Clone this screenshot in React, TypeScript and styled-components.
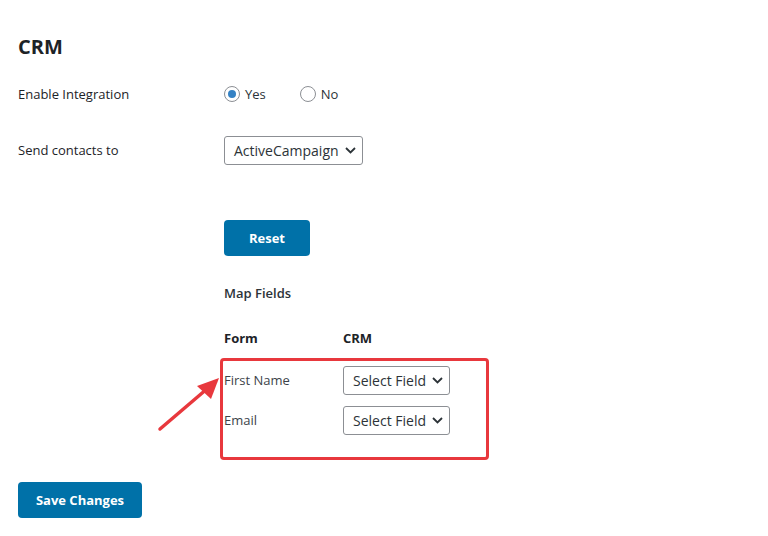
import styled, { createGlobalStyle } from 'styled-components';

const GlobalStyle = createGlobalStyle`
  html, body {
    margin: 0;
    padding: 0;
    background: #ffffff;
  }
  body {
    font-family: "Open Sans", "Noto Sans", Arial, sans-serif;
    font-size: 13px;
    color: #3c434a;
  }
`;

const Page = styled.div`
  padding: 33px 18px 0 18px;
  width: 768px;
  height: 536px;
  box-sizing: border-box;
`;

const Heading = styled.h2`
  margin: 0 0 13px;
  font-size: 20px;
  font-weight: 700;
  color: #1d2327;
  line-height: 28px;
`;

const Row = styled.div<{ $gap?: number }>`
  display: grid;
  grid-template-columns: 206px 1fr;
  align-items: center;
  height: 40px;
  margin-top: ${p => p.$gap ?? 0}px;
`;

const Indented = styled.div<{ $gap: number; $indent?: number }>`
  margin: ${p => p.$gap}px 0 0 ${p => p.$indent ?? 206}px;
`;

const Label = styled.div`
  font-size: 13px;
  color: #1d2327;
`;

const RadioGroup = styled.div`
  display: flex;
  align-items: center;
  gap: 34px;
`;

const RadioOption = styled.label`
  display: flex;
  align-items: center;
  gap: 5px;
  font-size: 13px;
  color: #2c3338;
`;

const RadioCircle = styled.span<{ $checked?: boolean }>`
  width: 14px;
  height: 14px;
  border-radius: 50%;
  border: 1px solid #8c8f94;
  display: flex;
  align-items: center;
  justify-content: center;
  &::after {
    content: '';
    width: 8px;
    height: 8px;
    border-radius: 50%;
    background: ${p => (p.$checked ? '#3582c4' : 'transparent')};
  }
`;

const Select = styled.div`
  display: inline-flex;
  align-items: center;
  gap: 6px;
  height: 27px;
  padding: 0 6px 0 9px;
  border: 1px solid #8c8f94;
  border-radius: 3px;
  font-size: 14px;
  color: #2c3338;
  background: #fff;
  justify-self: start;
`;

const Button = styled.button<{ $width: number }>`
  display: block;
  width: ${p => p.$width}px;
  height: 36px;
  border: none;
  border-radius: 4px;
  background: #0071a8;
  color: #ffffff;
  font-family: inherit;
  font-size: 13px;
  font-weight: 700;
  cursor: pointer;
`;

const SubTitle = styled.div`
  font-size: 13px;
  font-weight: 600;
  line-height: 20px;
  color: #2c3338;
`;

const MapArea = styled.div`
  position: relative;
  margin: 20px 0 0 206px;
  width: 280px;
`;

const MapHeader = styled.div`
  display: grid;
  grid-template-columns: 119px 1fr;
  height: 30px;
  margin-bottom: 7px;
  align-items: center;
  font-weight: 700;
  color: #1d2327;
  font-size: 13px;
`;

const MapRow = styled.div`
  display: grid;
  grid-template-columns: 119px 1fr;
  align-items: center;
  height: 40px;
  color: #3c434a;
`;

const Highlight = styled.div`
  position: absolute;
  left: -4px;
  top: 35px;
  width: 263px;
  height: 96px;
  border: 3px solid #e8383d;
  border-radius: 4px;
  pointer-events: none;
`;

const Arrow = styled.svg`
  position: absolute;
  left: -70px;
  top: 50px;
  overflow: visible;
`;

function Chevron() {
  return (
    <svg width="11" height="7" viewBox="0 0 11 7">
      <path d="M1 1l4.5 4.5L10 1" fill="none" stroke="#2c3338" strokeWidth="1.8" />
    </svg>
  );
}

const fields = ['First Name', 'Email'];

export default function App() {
  return (
    <Page>
      <GlobalStyle />
      <Heading>CRM</Heading>
      <Row>
        <Label>Enable Integration</Label>
        <RadioGroup>
          <RadioOption>
            <RadioCircle $checked />
            Yes
          </RadioOption>
          <RadioOption>
            <RadioCircle />
            No
          </RadioOption>
        </RadioGroup>
      </Row>
      <Row $gap={16}>
        <Label>Send contacts to</Label>
        <Select>
          ActiveCampaign
          <Chevron />
        </Select>
      </Row>
      <Indented $gap={50}>
        <Button $width={86}>Reset</Button>
      </Indented>
      <Indented $gap={27}>
        <SubTitle>Map Fields</SubTitle>
      </Indented>
      <MapArea>
        <MapHeader>
          <span>Form</span>
          <span>CRM</span>
        </MapHeader>
        {fields.map(f => (
          <MapRow key={f}>
            <span>{f}</span>
            <Select>
              Select Field
              <Chevron />
            </Select>
          </MapRow>
        ))}
        <Highlight />
        <Arrow width="70" height="62">
          <line x1="6" y1="56" x2="54" y2="15" stroke="#e8383d" strokeWidth="3.5" strokeLinecap="round" />
          <polygon points="65,5 43,13 57,26" fill="#e8383d" />
        </Arrow>
      </MapArea>
      <Indented $gap={42} $indent={0}>
        <Button $width={124}>Save Changes</Button>
      </Indented>
    </Page>
  );
}
